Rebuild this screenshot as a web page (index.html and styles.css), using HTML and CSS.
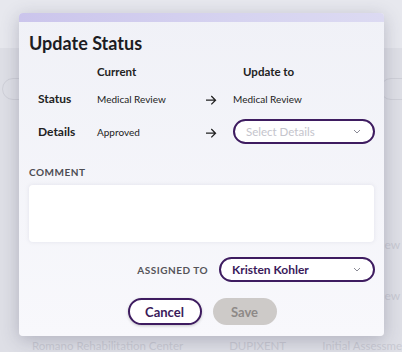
FILE: index.html
```html
<!DOCTYPE html>
<html lang="en">

<head>
    <meta charset="UTF-8">
    <meta name="viewport" content="width=device-width, initial-scale=1.0">
    <title>Update Status</title>
    <link rel="stylesheet" href="styles.css">
</head>

<body>
    <div class="page">
        <div class="page-top"></div>
        <div class="search-row">
            <div class="search-pill left"></div>
            <div class="search-pill right"></div>
        </div>
        <div class="table">
            <div class="row"><span class="c1">Review</span></div>
            <div class="row"><span class="c1">Review</span></div>
            <div class="row last">
                <span>Romano Rehabilitation Center</span>
                <span>DUPIXENT</span>
                <span>Initial Assessme</span>
            </div>
        </div>
    </div>

    <div class="modal">
        <div class="modal-bar"></div>
        <div class="modal-body">
            <h1 class="title">Update Status</h1>

            <div class="status-grid">
                <div></div>
                <div class="col-head">Current</div>
                <div></div>
                <div class="col-head update">Update to</div>

                <div class="row-label">Status</div>
                <div class="value">Medical Review</div>
                <div class="arrow">
                    <svg width="12" height="10" viewBox="0 0 12 10"><path d="M1 5.2h9.5M6.3 1l4.2 4.2-4.2 4.2" fill="none" stroke="#222" stroke-width="1.3"/></svg>
                </div>
                <div class="value">Medical Review</div>

                <div class="row-label">Details</div>
                <div class="value">Approved</div>
                <div class="arrow">
                    <svg width="12" height="10" viewBox="0 0 12 10"><path d="M1 5.2h9.5M6.3 1l4.2 4.2-4.2 4.2" fill="none" stroke="#222" stroke-width="1.3"/></svg>
                </div>
                <div class="select placeholder">
                    <span>Select Details</span>
                    <svg class="chev" width="8" height="5" viewBox="0 0 8 5"><path d="M1 1l3 3 3-3" fill="none" stroke="#8a8a95" stroke-width="1"/></svg>
                </div>
            </div>

            <div class="section-label">COMMENT</div>
            <div class="comment"></div>

            <div class="assign-row">
                <span class="section-label inline">ASSIGNED TO</span>
                <div class="select assign">
                    <span>Kristen Kohler</span>
                    <svg class="chev" width="8" height="5" viewBox="0 0 8 5"><path d="M1 1l3 3 3-3" fill="none" stroke="#8a8a95" stroke-width="1"/></svg>
                </div>
            </div>

            <div class="actions">
                <button class="btn cancel">Cancel</button>
                <button class="btn save">Save</button>
            </div>
        </div>
    </div>
</body>
</html>
```

FILE: styles.css
```css
body {
    font-family: Lato, 'Noto Sans', sans-serif;
    margin: 0;
    padding: 0;
    width: 402px;
    height: 352px;
    overflow: hidden;
    background-color: #dedfe6;
    position: relative;
}

/* dimmed page behind the dialog */
.page {
    height: 352px;
    display: flex;
    flex-direction: column;
}

.page > div,
.table > div {
    flex-shrink: 0;
}

.page-top {
    height: 48px;
    background-color: #e7e8ee;
}

.search-row {
    height: 22px;
    margin-top: 30px;
    display: flex;
    justify-content: space-between;
}

.search-pill {
    width: 60px;
    border: 1px solid #cfd0d8;
    border-radius: 12px;
}

.search-pill.left {
    margin-left: 2px;
}

.search-pill.right {
    margin-right: -40px;
}

.table {
    margin-top: 119px;
    display: flex;
    flex-direction: column;
}

.row {
    height: 51px;
    display: flex;
    align-items: center;
    font-size: 12px;
    color: #c9cad3;
}

.row .c1 {
    margin-left: 362px;
    white-space: nowrap;
}

.row.last {
    height: 12px;
    margin-top: 18px;
    font-size: 11.5px;
    line-height: 11px;
    white-space: nowrap;
}

.row.last span:nth-child(1) {
    margin-left: 32px;
    width: 201px;
}

.row.last span:nth-child(2) {
    width: 95px;
}

/* dialog */
.modal {
    position: absolute;
    left: 19px;
    top: 13px;
    width: 365px;
    height: 323px;
    border-radius: 4px;
    overflow: hidden;
    background: linear-gradient(#f0f1f7, #f8f8fc);
    box-shadow: 0 4px 18px rgba(60, 60, 90, 0.28);
}

.modal-bar {
    height: 9px;
    background: linear-gradient(90deg, #cbc5ec, #d6d3f0 60%, #dcdaf2);
}

.modal-body {
    padding: 0 9px 0 10px;
}

.title {
    margin: 9px 0 0;
    font-size: 18px;
    line-height: 24px;
    font-weight: 700;
    color: #1c1c22;
}

.status-grid {
    display: grid;
    grid-template-columns: 68px 103px 33px 142px;
    grid-template-rows: 24px 31px 35px;
    align-items: center;
    margin-top: 4px;
    color: #222;
}

.col-head {
    font-size: 11.5px;
    font-weight: 700;
}

.col-head.update {
    padding-left: 10px;
}

.row-label {
    font-size: 12px;
    font-weight: 700;
    padding-left: 9px;
}

.value {
    font-size: 10px;
}

.arrow {
    padding-left: 5px;
    display: flex;
    align-items: center;
    padding-top: 3px;
}

.select {
    height: 25px;
    box-sizing: border-box;
    border: 2px solid #3e1c60;
    border-radius: 13px;
    background-color: #ffffff;
    display: flex;
    align-items: center;
    justify-content: space-between;
    padding: 0 12px 0 11px;
}

.select.placeholder {
    font-size: 11.5px;
    color: #c4c4cc;
}

.select.assign {
    width: 156px;
    font-size: 12px;
    font-weight: 700;
    color: #3a1a5a;
}

.section-label {
    margin-top: 17px;
    font-size: 10px;
    font-weight: 700;
    letter-spacing: 0.5px;
    color: #4d4d53;
}

.section-label.inline {
    margin: 0;
    color: #555459;
}

.comment {
    margin-top: 7px;
    width: 345px;
    height: 57px;
    background-color: #ffffff;
    border-radius: 4px;
    box-shadow: 0 0 4px rgba(80, 80, 120, 0.12);
}

.assign-row {
    margin-top: 15px;
    display: flex;
    justify-content: flex-end;
    align-items: center;
    gap: 11px;
}

.actions {
    margin-top: 16px;
    display: flex;
    justify-content: center;
    gap: 11px;
}

.btn {
    height: 27px;
    border-radius: 14px;
    font-family: Lato, 'Noto Sans', sans-serif;
    font-size: 13px;
    font-weight: 700;
    box-sizing: border-box;
}

.btn.cancel {
    width: 74px;
    background-color: #ffffff;
    border: 2px solid #3e1c60;
    color: #3a1a5a;
    box-shadow: 0 1px 3px rgba(0, 0, 0, 0.2);
}

.btn.save {
    width: 64px;
    background-color: #cdcac8;
    border: none;
    color: #8d8987;
}
```
